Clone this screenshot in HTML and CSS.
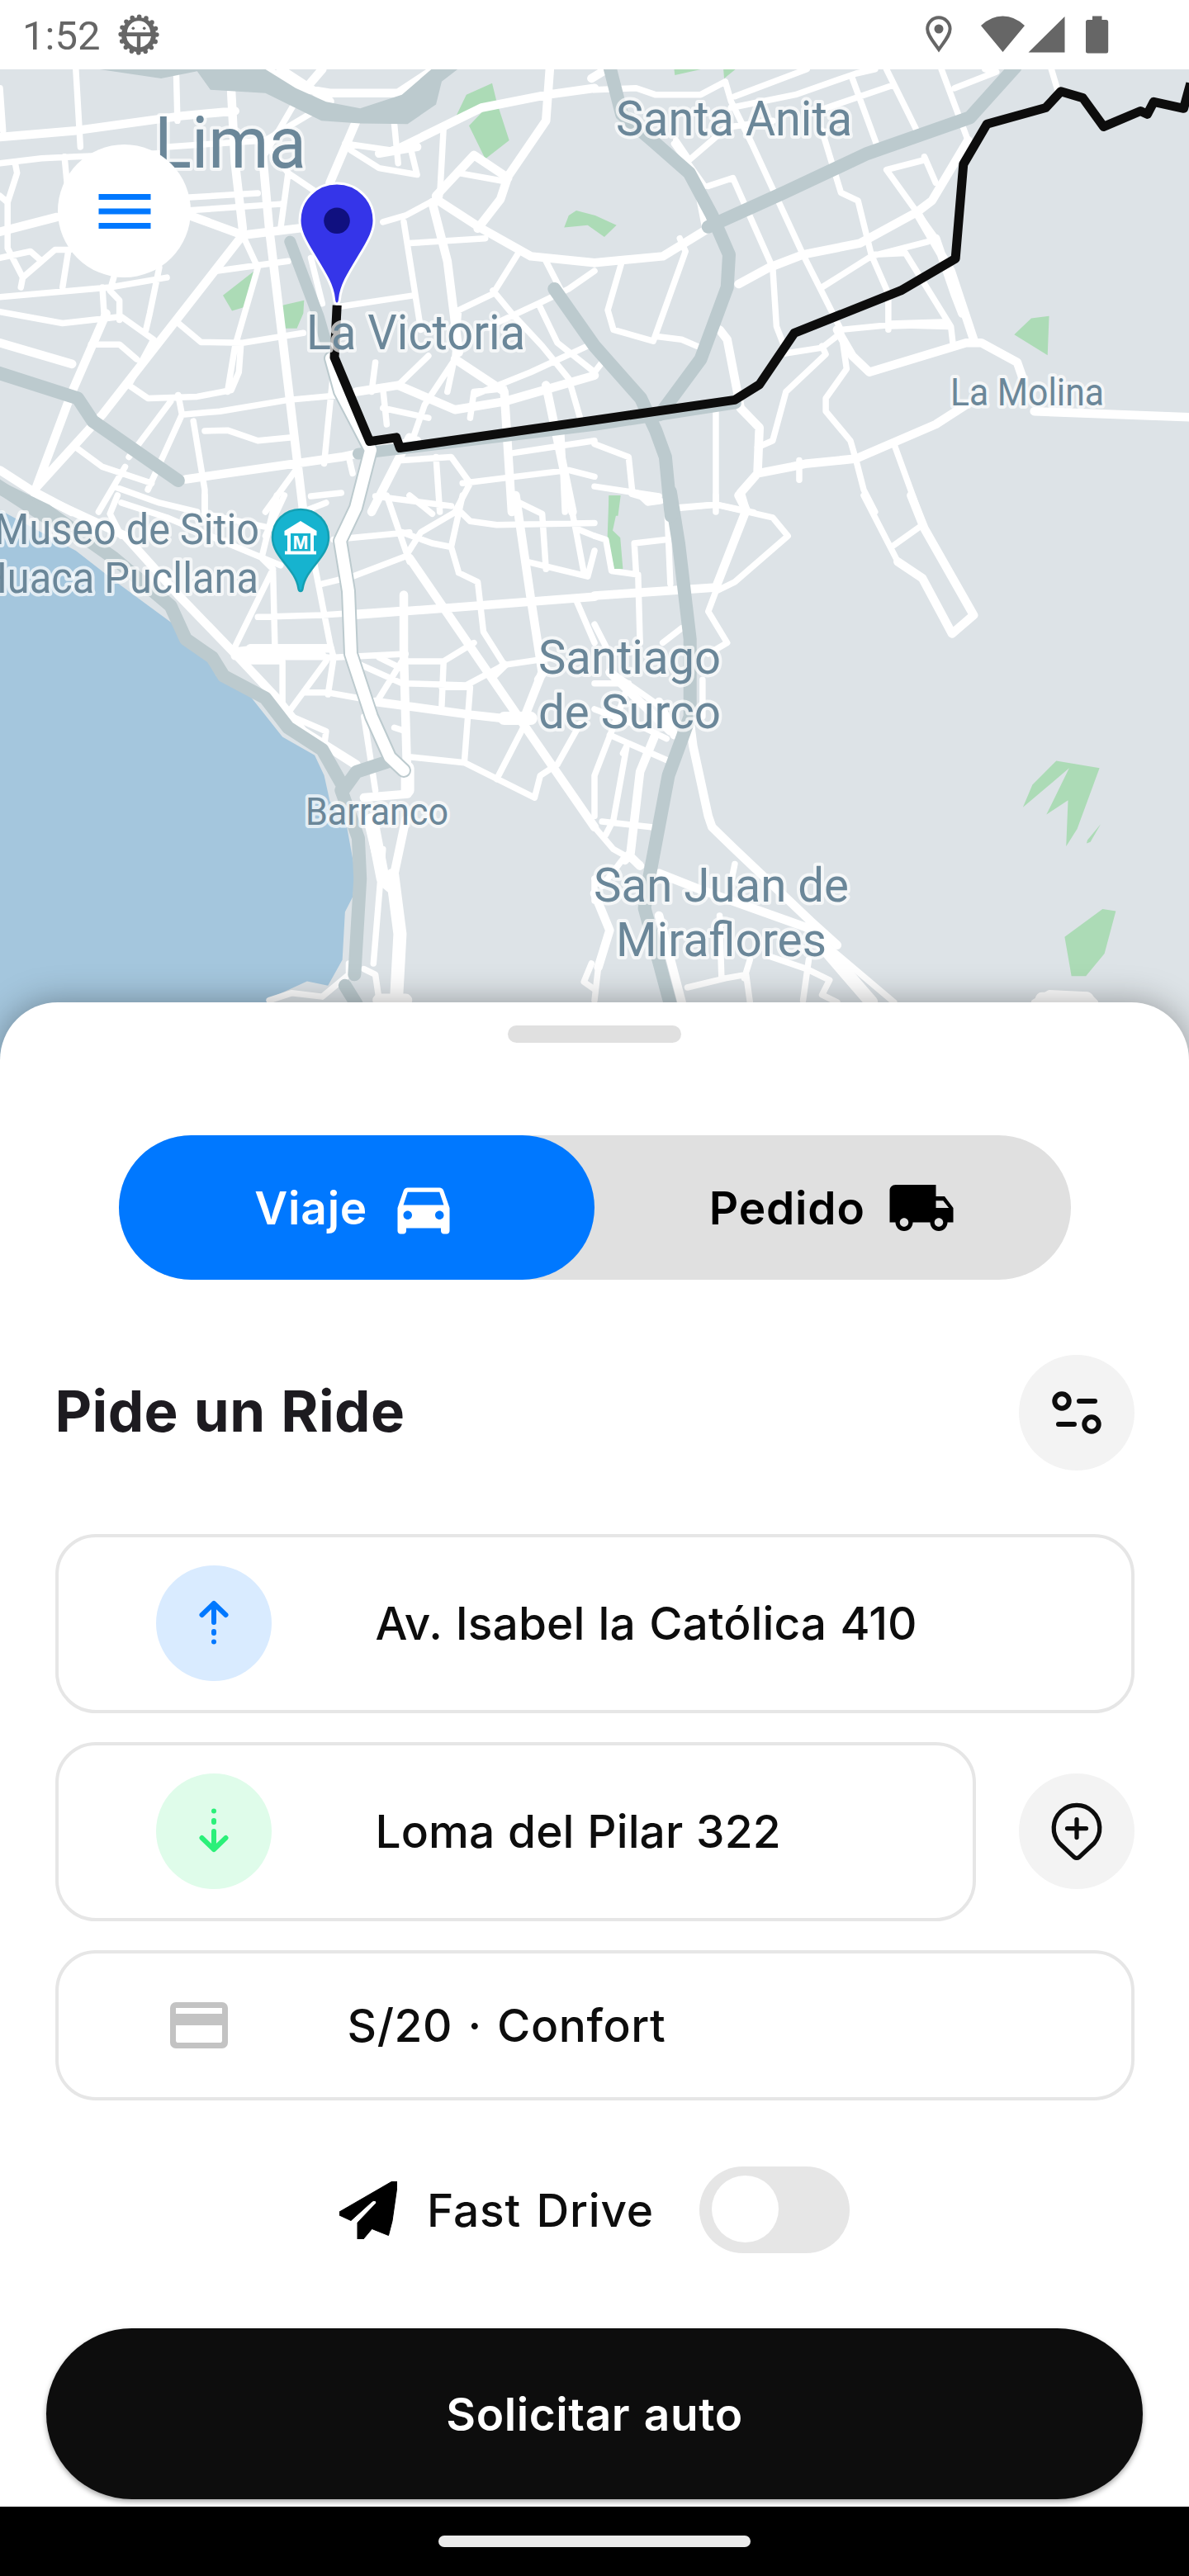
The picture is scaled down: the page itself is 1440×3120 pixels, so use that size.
FILE: index.html
```
<!DOCTYPE html>
<html lang="es">
<head>
<meta charset="utf-8">
<title>Pide un Ride</title>
<link rel="stylesheet" href="styles.css">
</head>
<body>
<div class="screen">
  <header class="status">
    <div class="status-left">
      <span class="clock">1:52</span>
      <svg class="bug" viewBox="-26 -26 52 52">
        <circle r="21" fill="#666"/>
        <circle r="21.8" fill="none" stroke="#666" stroke-width="5.6" stroke-linecap="round" stroke-dasharray="0 8.56"/>
        <path fill="#fff" d="M-14-2.7A14 14 0 0 1 14-2.7ZM-15 2H-2.200V15.200A15 15 0 0 1-15 2ZM15 2H2.200V15.200A15 15 0 0 0 15 2Z"/>
        <circle cx="-6.700" cy="-7.700" r="1.800" fill="#666"/><circle cx="6.700" cy="-7.700" r="1.800" fill="#666"/>
      </svg>
    </div>
    <svg class="status-icons" viewBox="1115 14 235 56">
      <path fill="none" stroke="#666" stroke-width="4" d="M1137 60C1131 51 1123.200 43 1123.200 35A13.700 13.700 0 0 1 1150.600 35C1150.600 43 1143 51 1137 60Z"/>
      <circle cx="1137" cy="35" r="5.500" fill="#666"/>
      <path fill="#666" d="M1188 31Q1200 19.500 1214.500 19.500T1241 31L1214.500 63ZM1289.500 20V63.500H1245.500ZM1323 19.500H1334.500V24H1340Q1342.200 24 1342.200 26.500V62Q1342.200 64.500 1340 64.500H1317.500Q1315 64.500 1315 62V26.500Q1315 24 1317.500 24H1323Z"/>
    </svg>
  </header>

  <section class="map">
    <svg class="map-art" viewBox="0 84 1440 1216">
      <rect y="84" width="1440" height="1216" fill="#dde3e7"/>
      <g class="land" transform="translate(0 600) scale(.459184 .446429)">
        <path class="water" d="M0 40 100 95 200 150 300 230 465 355 490 400 545 440 570 490 660 545 745 655 830 705 855 760 870 830 915 900 938 1030 930 1090 910 1130 903 1260 865 1330 810 1318 710 1365 700 1385V1600H0Z"/>
        <g transform="translate(1568 0)">
          <path class="park" d="M38 0H68L48 95 68 115 75 200H52L34 115ZM1218 720 1332 740 1273 905 1244 952 1249 827 1192 866 1252 740 1130 846 1155 785ZM1335 892 1308 940 1298 944 1300 935ZM1340 1122 1375 1128 1345 1243 1296 1304H1258L1240 1198Z"/>
        </g>
      </g>
      <g class="land" transform="scale(.459184 .395408)">
        <path class="park" d="M1298 255 1310 312 1343 430 1280 487 1237 385 1270 345 1202 358 1230 290ZM676 825 655 937 612 952 588 905ZM738 937 802 920 800 960 783 1006H748ZM1520 645 1570 660 1626 690 1594 726 1550 690 1488 697 1500 660ZM1778 212H1850L1780 230ZM1908 212H1940L1910 240ZM2720 975 2767 968 2763 1088 2675 1025ZM1606 1518H1637L1630 1580H1606Z"/>
      </g>

      <g class="roads" transform="scale(.459184 .395408)">
        <path class="w7" d="M0 270 8 400M200 212 212 450M465 230 468 370M0 500 110 485 200 480 420 470M0 600 20 620 45 530 40 500M20 620 20 760 60 850 145 765H185M0 790 80 770 110 800 60 850 55 880M170 480 180 600M180 770 165 880M420 820 395 960 385 1010M300 850 290 890 315 920V980M270 880 275 970M0 910 290 880 440 850M0 955 165 990 320 970 405 1040M240 1055H315L360 1100M405 1040 340 1180 390 1220 520 1215 610 1195 630 1140 635 1060M465 985 530 1048 640 1050 800 1020M570 830 760 800M490 605 680 592M490 645 740 625M440 450 700 430 830 340M700 440 760 530 830 585M760 530 740 700M775 320 700 470M640 720 680 820 620 1060 600 1200M470 1210 480 1270 580 1260 760 1225 900 1210M480 1270 390 1500M510 1290 540 1500V1568M450 1230 340 1400M540 1320 600 1318 680 1350 770 1340M200 1370 270 1430 400 1480M300 1490 420 1540 520 1568M330 1430 260 1568M880 1130 865 1300 855 1420M780 1440 700 1568M890 940 1090 905M1065 680 1110 1010M1080 745 1280 730M1010 680 1070 660 1150 610M820 790 850 930M910 440 1030 460 1100 430M1040 380 1050 500M925 460 1000 515 1100 535 1080 440M1170 390 1160 600M1210 530 1330 555M1370 770 1300 900 1210 950 1200 1090 1180 1200M1300 890 1350 960 1430 1060 1500 1160 1530 1280M1568 830 1500 885 1420 930 1290 1000M1440 800 1480 890M1420 930 1470 1050 1568 1140M1250 1210 1400 1140 1568 1050M1200 1100 1120 1240 1090 1340M1240 1280 1250 1200 1330 1190M1010 1190 1020 1300M1050 1180 1130 1090M1010 1250 1130 1280M990 1110 980 1200M1340 1390 1568 1350M1150 1400 1160 1568M1060 1410 1190 1400 1240 1480 1200 1568M1220 1480 1500 1440 1568 1460M820 1520 900 1510M990 1520 1190 1550M1480 1310 1490 1568M920 1400 930 1450"/>
        <path class="w10" d="M0 420 200 400 480 355 620 340M0 710 150 665M500 660 640 720 890 685M610 280 620 500 640 700M690 440 710 700 760 1180 800 1568M640 720 270 1270 90 1500M280 960 190 1200 90 1510M0 1050 190 1115M490 1468 900 1400 1100 1350M0 1440 80 1500 190 1568M940 370 870 560M1100 450 1000 470M1060 450 1270 330 1445 290 1568 270M1450 212 1440 370 1340 540 1320 610 1260 700M1150 600 1250 475 1340 545M1140 620 1180 800 1210 1080M1150 610 1270 700 1400 785 1568 805M940 1200 1050 1180 1200 1255 1330 1230 1568 1150M1200 1100 1330 1200 1350 1568M1440 1180 1480 1400 1510 1568M1600 212 1560 240M1080 1340 980 1568M700 212 790 270 870 285H1050L1145 212M740 212 870 310M850 212 800 280"/>
        <g transform="translate(1568 0)">
          <path class="w7" d="M0 275 110 270 160 290H280L345 250 360 310 415 440 550 780 650 1010M370 295 560 212M360 330 530 290 690 225 740 212M680 240 745 445M600 335 790 260M770 212 850 400M600 400 650 590 695 615 730 780 775 900 775 1010M915 212 985 430M950 270 1060 220 1030 212M300 570 365 545 470 820 480 1000 500 1060M70 810 35 950 50 1010 155 1045 240 770 225 730M160 1030 230 1040 290 1070M215 430 250 490 350 390 470 370M600 880 730 785 880 740M820 775 940 1000 945 1050M870 490 770 520 900 730M870 480 900 560M730 780 820 775M650 1010 780 995 935 1000M490 1085 600 1065 650 1020M600 1060 610 1085 505 1200 470 1350 430 1370M655 1050 665 1130 610 1220V1260L675 1350 690 1410 710 1500 740 1568M790 1360 855 1568M320 1250V1568M0 1360 90 1400 100 1510M0 1490 170 1520M220 1555 320 1545 420 1570M540 1410V1470M0 1140 20 1110M210 440 290 570M275 600 290 690M1205 212 1225 290"/>
          <path class="w10" d="M0 805 180 785 300 700M380 870 460 820 550 780 700 745 850 650 890 615 985 430M850 650 940 830 1000 1040M640 1010 680 1090 725 1140 980 1050 1020 1050 1115 1110 1130 1160M900 730 950 900 970 960M330 1010 350 1040 385 1250 435 1310 430 1450 385 1510 400 1568M430 1450 520 1430 560 1420 690 1405 900 1300 980 1240M1160 1260 1568 1278M100 1510 160 1530M780 995 920 990"/>
        </g>
      </g>
      <g class="roads" transform="translate(0 600) scale(.459184 .446429)">
        <path class="w7" d="M310 0 290 50 320 110M540 0V50L720 90M730 0 690 170 720 200 725 410M750 0 700 110M320 20 440 60 600 130 740 190M620 410 720 200M680 330 850 325 1060 310M640 450H745V590M630 420 670 415 870 440 1070 430M860 450 760 590M880 440 865 540M800 535 865 535 1000 560M830 190 870 400 880 440M850 240 930 220 1070 165M880 120 1080 100M770 600 860 640 855 680 945 740M810 40 860 20M930 450 1060 510 1230 515 1330 460 1460 440M1000 550 1060 450H1170L1250 400M1170 450 1165 570M1000 440 1060 470M1240 520 1225 720M1165 520H1240M1210 210 1260 235 1275 370 1330 460M1220 0 1190 140 1140 130 1060 100M1070 165 1110 100 1210 40 1240 70 1310 80 1568 75M1190 140 1210 210M1020 0 1080 180M1080 0 1140 50M1040 630 1070 640M1085 710 1225 725 1410 820 1425 760 1470 730M1380 630 1310 770M1470 730 1530 620M1500 0 1520 100 1540 210M1390 180 1550 220 1568 150M1370 20 1430 50 1440 200M1520 90 1568 110M1520 285 1568 400M960 600 990 800M1010 960 985 1270M960 1285 990 1300 1000 1370M710 1370 770 1350 850 1360 920 1300V1270M1560 1270 1540 1320 1568 1340M1568 1100V1040"/>
        <path class="w10" d="M100 0 330 110 470 270 620 430 730 550 800 640 940 730M620 435H850M660 415H870M930 325 1568 275M1065 270 1065 430 1075 800M1080 170 1300 500 1380 620 1568 900M1360 0 1400 280 1430 480 1380 610M990 560 1240 595 1370 610M960 820 1075 810M975 900 1010 1050 1045 1080M1070 880 1035 1050M1300 490 1330 460M1440 470 1420 500"/>
        <path class="w14" d="M980 880 1010 1040M1035 1030 1055 1190 1045 1375M1075 740V800M1330 605H1400M1000 1370H1070"/>
        <g transform="translate(1568 0)">
          <path class="w7" d="M0 110 30 120 45 205 115 215 120 400M190 120 105 130 110 215M190 0 200 240M120 0 140 20 175 15M320 0V25L220 35M320 25 470 60 510 110 370 235 320 260 300 315 350 400 300 430M180 400 230 360M710 0 800 180M790 135 865 80M0 350 30 410M285 500V600M0 580 130 630 190 660M40 650 190 718M85 680 50 880M75 700 85 680M20 885 150 900M0 510 90 510M90 510 60 600 0 760V870M0 900 50 960 120 1000M50 880 30 920M45 480 170 570M330 1140 335 1310M245 1335 345 1310 400 1300 410 1375M410 1260 395 1310M565 1260 550 1370M460 1250 560 1285 620 1315 600 1355 640 1375M80 980 20 1060 0 1040M600 1210 790 1375M370 1000 360 1050M1160 1375 1200 1350 1300 1355 1320 1375M0 1370 10 1280"/>
          <path class="w10" d="M0 272 320 250 400 40 380 0M835 0 870 90 1000 325 943 375 865 225 800 180M250 600 260 680 300 870 310 900 370 960 570 1155 640 1220M170 1025 280 1070 580 1180M160 650 120 750 95 970 80 990M170 560 210 650M0 1080 40 1180 10 1280M170 1140 230 1375M40 480 200 640M95 980 120 1005"/>
          <path class="w14" d="M600 1220 730 1375M1180 1366H1300"/>
        </g>
      </g>

      <g class="highways" transform="translate(0 600) scale(.459184 .446429)">
        <path d="M0-20 120 40 300 170 450 300 490 390 560 440 590 490 700 550 760 630 850 690 905 790M900 800 945 930 950 1040 935 1300M905 800 940 750 1030 720M910 1330 940 1380"/>
        <path d="M1768-10 1790 130 1820 390V600L1763 760 1708 1060 1700 1120 1768 1380"/>
      </g>
      <g class="highways" transform="scale(.459184 .395408)">
        <path class="solid" d="M260 212 425 240 520 218 555 275 700 285 848 370 950 378 1075 380 1150 320 1165 250 1215 205H1145L1060 290 950 332 860 312 780 270 690 205H260Z"/>
        <path d="M-10 1140 205 1220 245 1290 470 1472M-10 1485 100 1568 200 1640M1462 885 1568 1060 1690 1220 1730 1320 1755 1400 1770 1580M1608 205 1640 350 1720 430 1818 530 1878 660 1923 780 1918 880 1848 1100 1740 1270M2678 205 2558 360 2288 470 2068 590 1868 695"/>
        <path class="slim" d="M765 740 840 970 860 1050M945 1390 1568 1302 1940 1235"/>
      </g>
      <path class="express-edge" d="M401 434 412 474 449 545 431 615 412 655 422 716 425 792 450 868 472 917 489 933"/>
      <path class="express" d="M401 434 412 474 449 545 431 615 412 655 422 716 425 792 450 868 472 917 489 933"/>

      <g transform="scale(.459184 .395408)">
        <path class="route" d="M889 935 882 1095 965 1325 975 1352 1045 1340 1055 1372 1568 1287 1938 1225 2003 1178 2095 1020 2376 890 2520 792 2541 503 2603 380 2758 330 2798 280 2856 300 2911 388 3008 340 3026 350 3043 312 3122 332 3140 255"/>
      </g>

      <g class="labels">
        <text x="187" y="203" font-size="87" textLength="184" lengthAdjust="spacingAndGlyphs">Lima</text>
        <text x="371" y="423" font-size="60" textLength="265" lengthAdjust="spacingAndGlyphs">La Victoria</text>
        <text x="746" y="163.500" font-size="58.500" textLength="286" lengthAdjust="spacingAndGlyphs">Santa Anita</text>
        <text x="1151" y="490.500" font-size="46.500" textLength="186" lengthAdjust="spacingAndGlyphs">La Molina</text>
        <text x="-7" y="659" font-size="51" textLength="321" lengthAdjust="spacingAndGlyphs">Museo de Sitio</text>
        <text x="-26" y="717.500" font-size="51" textLength="339" lengthAdjust="spacingAndGlyphs">Huaca Pucllana</text>
        <text x="370" y="998.700" font-size="45.500" textLength="173" lengthAdjust="spacingAndGlyphs">Barranco</text>
        <text x="652" y="815.600" font-size="58" textLength="221" lengthAdjust="spacingAndGlyphs">Santiago</text>
        <text x="652" y="881.700" font-size="58" textLength="221" lengthAdjust="spacingAndGlyphs">de Surco</text>
        <text x="719" y="1091.500" font-size="58" textLength="309" lengthAdjust="spacingAndGlyphs">San Juan de</text>
        <text x="746" y="1157.600" font-size="58" textLength="255" lengthAdjust="spacingAndGlyphs">Miraflores</text>
      </g>

      <path fill="#16b3cf" stroke="#159fb2" stroke-width="2.500" d="M364 617C383.500 617 398 631.500 398 651C398 675 370 688 366.500 713Q366 716 364 716T361.500 713C358 688 330 675 330 651C330 631.500 344.500 617 364 617Z"/>
      <path fill="#fff" d="M364 631 383.500 643V648.500H380V667.500H383V671.500H345V667.500H348V648.500H344.500V643ZM352 646V667.500H376V646Z" fill-rule="evenodd"/>
      <text class="museum" x="364" y="665" textLength="18.500" lengthAdjust="spacingAndGlyphs">M</text>

      <path fill="#3535e9" stroke="#fff" stroke-width="3" d="M408 222C433 222 453 242 453 267C453 279 447 290 440 302C425 327 413 344 411.500 362Q411 368 408 368T404.500 362C403 344 391 327 376 302C369 290 363 279 363 267C363 242 383 222 408 222Z"/>
      <circle cx="408" cy="267.300" r="15.800" fill="#101080"/>
    </svg>
    <button class="menu" aria-label="Menú">
      <svg viewBox="0 0 24 24" fill="#0078ff"><path d="M3 18h18v-2H3zm0-5h18v-2H3zm0-7v2h18V6z"/></svg>
    </button>
  </section>

  <main class="sheet">
    <div class="grip"></div>
    <div class="tabs">
      <div class="tab tab-active"><span>Viaje</span>
        <svg viewBox="0 0 24 24" fill="#fff"><path d="M18.920 6.010C18.720 5.420 18.160 5 17.500 5h-11c-.66 0-1.210.42-1.420 1.010L3 12v8c0 .55.45 1 1 1h1c.55 0 1-.45 1-1v-1h12v1c0 .55.45 1 1 1h1c.55 0 1-.45 1-1v-8l-2.080-5.990zM6.500 16c-.83 0-1.500-.67-1.500-1.500S5.670 13 6.500 13s1.500.67 1.500 1.500S7.330 16 6.500 16zm11 0c-.83 0-1.500-.67-1.500-1.500s.67-1.500 1.500-1.500 1.500.67 1.500 1.500-.67 1.500-1.500 1.500zM5 11l1.500-4.500h11L19 11H5z"/></svg>
      </div>
      <div class="tab"><span>Pedido</span>
        <svg viewBox="0 0 24 24"><path d="M20 8h-3V4H3c-1.100 0-2 .9-2 2v11h2c0 1.660 1.340 3 3 3s3-1.340 3-3h6c0 1.660 1.340 3 3 3s3-1.340 3-3h2v-5l-3-4zM6 18.500c-.83 0-1.500-.67-1.500-1.500s.67-1.500 1.500-1.500 1.500.67 1.500 1.500-.67 1.500-1.500 1.500zm13.500-9l1.960 2.500H17V9.500h2.500zm-1.500 9c-.83 0-1.500-.67-1.500-1.500s.67-1.500 1.500-1.500 1.500.67 1.500 1.500-.67 1.500-1.500 1.500z"/></svg>
      </div>
    </div>

    <div class="title-row">
      <h1>Pide un Ride</h1>
      <button class="round" aria-label="Opciones">
        <svg viewBox="0 0 140 140" fill="none" stroke="#0d0d0d" stroke-width="6" stroke-linecap="round"><circle cx="52" cy="56" r="8.700"/><circle cx="88" cy="84" r="8.700"/><path d="M73 56H92M48 84H67"/></svg>
      </button>
    </div>

    <div class="fields">
      <div class="field">
        <svg class="badge" viewBox="0 0 140 140"><circle cx="70" cy="70" r="70" fill="#d9ebff"/><path fill="none" stroke="#0078ff" stroke-width="6" stroke-linecap="round" stroke-linejoin="round" d="M55.500 60 70 46 84.500 60M70 48V69M70 80V82M70 92.500V92.600"/></svg>
        <span class="origin">Av. Isabel la Católica 410</span>
      </div>
      <div class="field-row">
        <div class="field">
          <svg class="badge" viewBox="0 0 140 140"><circle cx="70" cy="70" r="70" fill="#dffcea"/><path fill="none" stroke="#2bf079" stroke-width="6" stroke-linecap="round" stroke-linejoin="round" d="M55.500 78 70 92 84.500 78M70 90V70M70 59V57M70 45.500V45.400"/></svg>
          <span class="dest">Loma del Pilar 322</span>
        </div>
        <button class="round" aria-label="Agregar parada">
          <svg viewBox="0 0 140 140" fill="none" stroke="#0d0d0d" stroke-width="5.250" stroke-linecap="round" stroke-linejoin="round"><path d="M49 84.500A27.800 27.800 0 1 1 91 84.500L73 101.300Q70 103.500 67 101.300ZM58.500 66.500H81.500M70 55.500V77.500"/></svg>
        </button>
      </div>
      <div class="field field-pay">
        <svg class="card" viewBox="0 0 24 24" fill="#c3c3c3"><path fill-rule="evenodd" d="M4 4H20A2 2 0 0 1 22 6V18A2 2 0 0 1 20 20H4A2 2 0 0 1 2 18V6A2 2 0 0 1 4 4ZM4 6V8H20V6ZM4 12V17.200Q4 18 4.800 18H19.200Q20 18 20 17.200V12Z"/></svg>
        <span class="fare">S/20 · Confort</span>
      </div>
    </div>

    <div class="fast">
      <svg class="plane" viewBox="0 0 70 70"><path stroke="#000" stroke-linejoin="round" d="M70 0H64L0 37V41L14 47.500 40 24Q44 22 45 26L22 50V70H29L39.500 57.500 59.500 65.500 64 48 70 6Z"/></svg>
      <span class="fast-label">Fast Drive</span>
      <div class="toggle"><div class="knob"></div></div>
    </div>

    <button class="cta">Solicitar auto</button>
  </main>

  <footer class="navbar"><div class="home"></div></footer>
</div>
</body>
</html>
```
FILE: styles.css
```
* { box-sizing: border-box; }
body { margin: 0; background: #fff; font-family: Inter, "Noto Sans", sans-serif; color: #0d0d0d; }
button { border: 0; padding: 0; font: inherit; }
svg { display: block; flex: none; }

.screen { width: 1440px; height: 3120px; display: flex; flex-direction: column; overflow: hidden; }

.status { height: 84px; flex: none; display: flex; align-items: center; justify-content: space-between; padding: 0 90px 0 27px; }
.status-left { display: flex; align-items: center; gap: 21px; color: #666; }
.clock { font: 400 49px/84px Roboto, sans-serif; padding-top: 2px; height: 84px; }
.bug { width: 52px; height: 52px; }
.status-icons { width: 235px; height: 56px; }

.map { position: relative; height: 1216px; flex: none; }
.map-art { width: 1440px; height: 1216px; }
.water { fill: #a4c6dd; }
.park { fill: #acdbb6; }
.roads path { fill: none; stroke: #fff; stroke-linejoin: round; stroke-linecap: round; vector-effect: non-scaling-stroke; }
.roads .w7 { stroke-width: 7.5px; }
.roads .w10 { stroke-width: 10.5px; }
.roads .w14 { stroke-width: 16px; }
.highways path { fill: none; stroke: #bccace; stroke-width: 16px; stroke-linejoin: round; stroke-linecap: round; vector-effect: non-scaling-stroke; }
.highways .slim { stroke-width: 14px; }
.highways .solid { fill: #bccace; stroke: none; }
.express-edge, .express { fill: none; stroke-linejoin: round; stroke-linecap: round; }
.express-edge { stroke: #bccace; stroke-width: 18px; }
.express { stroke: #fff; stroke-width: 14px; }
.route { fill: none; stroke: #0d0d0d; stroke-width: 11px; stroke-linejoin: round; vector-effect: non-scaling-stroke; }
.labels text { font-family: Roboto, sans-serif; fill: #6b8799; stroke: rgba(255, 255, 255, .7); stroke-width: 8px; stroke-linejoin: round; paint-order: stroke; }
.museum { font: 700 22px Inter, sans-serif; fill: #fff; text-anchor: middle; }

.menu { position: absolute; left: 70px; top: 91px; width: 161px; height: 161px; border-radius: 50%; background: #fff; display: flex; align-items: center; justify-content: center; }
.menu svg { width: 84px; height: 84px; }

.sheet { position: relative; flex: none; height: 1822px; margin-top: -86px; background: #fff; border-radius: 70px 70px 0 0; box-shadow: 0 0 42px rgba(0, 0, 0, .34); display: flex; flex-direction: column; align-items: center; padding-top: 28px; }
.grip { width: 210px; height: 21px; border-radius: 10.5px; background: #e0e0e0; }

.tabs { display: flex; width: 1153px; height: 175px; margin-top: 112px; border-radius: 88px; background: #e0e0e0; }
.tab { flex: 1; display: flex; align-items: center; justify-content: center; gap: 26px; border-radius: 88px; font-size: 55px; font-weight: 600; letter-spacing: .8px; color: #000; }
.tab-active { background: #0078ff; color: #fff; }
.tab svg { width: 84px; height: 84px; }

.title-row { width: 1307px; height: 140px; margin-top: 91px; display: flex; align-items: center; justify-content: space-between; }
.title-row h1 { margin: 0 0 4px; font-size: 69px; font-weight: 650; letter-spacing: .4px; word-spacing: 2px; color: #1d1b20; }
.round { width: 140px; height: 140px; flex: none; border-radius: 50%; background: #f3f3f3; }
.round svg { width: 140px; height: 140px; }

.fields { width: 1307px; margin-top: 77px; display: flex; flex-direction: column; gap: 35.5px; font-size: 55px; font-weight: 500; }
.field { height: 216.5px; flex: 1 0 auto; display: flex; align-items: center; gap: 126px; padding-left: 118px; border: 4px solid #e6e6e6; border-radius: 49px; }
.field-row { display: flex; align-items: center; gap: 52px; }
.badge { width: 140px; height: 140px; }
.field-pay { height: 181.5px; padding-left: 128px; gap: 138px; }
.card { width: 84px; height: 84px; }
.origin { letter-spacing: .1px; word-spacing: 1.5px; }
.dest { letter-spacing: .1px; word-spacing: 1px; }
.fare { letter-spacing: .6px; word-spacing: 3px; }

.fast { margin-top: 80.5px; height: 105px; display: flex; align-items: center; font-size: 55px; font-weight: 500; }
.plane { width: 70px; height: 70px; }
.fast-label { margin: 0 55px 0 36px; letter-spacing: .8px; word-spacing: 3px; }
.toggle { width: 182px; height: 105px; border-radius: 53px; background: #e6e6e6; padding: 11px 15.5px; }
.knob { width: 81px; height: 81px; border-radius: 50%; background: #fff; }

.cta { width: 1328px; height: 207px; margin-top: 91px; flex: none; border-radius: 104px; background: #0d0d0d; color: #fff; font-size: 55px; font-weight: 600; letter-spacing: .6px; word-spacing: 2px; box-shadow: 0 3px 6px rgba(0, 0, 0, .35); }

.navbar { position: relative; height: 84px; flex: none; background: #000; display: flex; align-items: center; justify-content: center; }
.home { width: 378px; height: 14px; border-radius: 7px; background: #ebebeb; }
```
